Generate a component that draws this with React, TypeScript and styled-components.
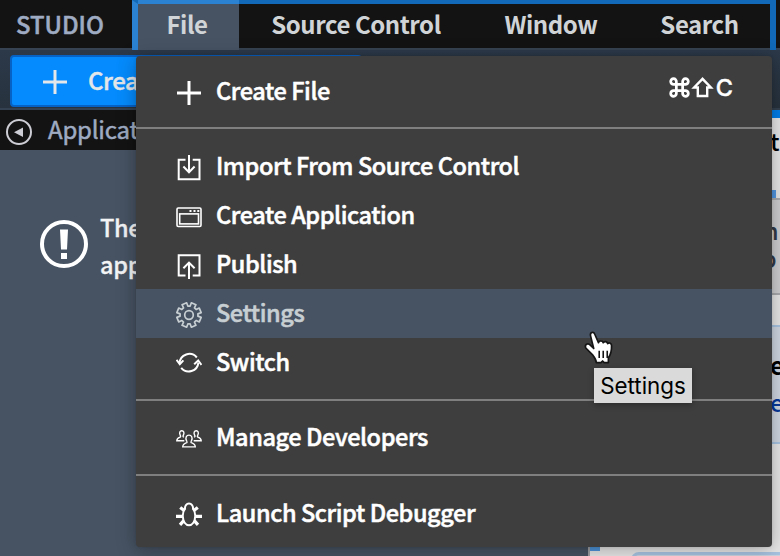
import React from "react";
import styled, { createGlobalStyle } from "styled-components";

const Global = createGlobalStyle`
  * { box-sizing: border-box; }
  body { margin: 0; overflow: hidden; background: #e8e8e8; }
`;

const sans = `"Noto Sans CJK SC", "Noto Sans", sans-serif`;

const Screen = styled.div`
  position: relative;
  width: 780px;
  height: 556px;
  overflow: hidden;
  display: flex;
  flex-direction: column;
  font-family: ${sans};
  white-space: nowrap;
`;

const MenuBar = styled.header`
  height: 50px;
  flex: none;
  display: flex;
  background: linear-gradient(#131313 48px, #374352 48px);
`;

const Brand = styled.div`
  width: 132px;
  padding-left: 16px;
  line-height: 48px;
  font-size: 23.8px;
  font-weight: 500;
  color: #9eabc2;
  -webkit-text-stroke: 0.5px #9eabc2;
`;

const MenuGroup = styled.nav`
  width: 644px;
  height: 50px;
  display: flex;
  border: solid #1169b7;
  border-width: 4px 6px 0;
  border-left-color: #2b82d3;
`;

const MenuTitle = styled.div<{ $width: number; $active?: boolean }>`
  width: ${(p) => p.$width}px;
  height: 46px;
  line-height: 40px;
  padding-right: ${(p) => (p.$active ? 3 : 0)}px;
  text-align: center;
  font-size: 24px;
  font-weight: 700;
  letter-spacing: -0.45px;
  color: #d0d4d7;
  background: ${(p) => (p.$active ? "#475363" : "transparent")};
  box-shadow: ${(p) => (p.$active ? "0 -4px #2b82d3" : "none")};
`;

const Toolbar = styled.div`
  height: 60px;
  flex: none;
  padding: 5px 10px 0;
  background: linear-gradient(#2c3949, #27323e);
  border-bottom: 2px solid #344150;
`;

const CreateButton = styled.button`
  width: 352px;
  height: 52px;
  display: flex;
  align-items: center;
  padding: 0 0 0 30px;
  gap: 20px;
  border: 2px solid #0762c6;
  border-radius: 4px;
  background: #058bfd;
  color: #e4e7ea;
  font: 500 24px/46px ${sans};
  letter-spacing: -0.4px;
  -webkit-text-stroke: 0.4px #e4e7ea;
  svg { margin-top: 2px; }
  span { margin-top: -2px; }
`;

const Body = styled.main`
  flex: 1;
  display: flex;
  min-height: 0;
`;

const Sidebar = styled.aside`
  width: 588px;
  flex: none;
  background: #475363;
`;

const SidebarHeader = styled.div`
  height: 40px;
  display: flex;
  align-items: center;
  gap: 15px;
  padding-left: 6px;
  background: #131313;
  color: #9eabc2;
  font-size: 24px;
  line-height: 38px;
  letter-spacing: -0.2px;
  -webkit-text-stroke: 0.5px #9eabc2;
  svg { margin-top: 4px; }
  span { margin-top: -3px; }
`;

const Notice = styled.div`
  display: flex;
  padding: 59px 0 0 40px;
  gap: 12px;
  color: #f3f4f5;
  font-size: 23.5px;
  line-height: 37px;
  font-weight: 500;
  letter-spacing: -0.3px;
  -webkit-text-stroke: 0.3px #f3f4f5;
  svg { margin-top: 11px; flex: none; }
`;

const Splitter = styled.div`
  width: 2px;
  flex: none;
  background: #9d9fa2;
`;

const Content = styled.section`
  flex: 1;
  display: flex;
  flex-direction: column;
  background: #e8e8e8;
  border-top: 8px solid #007eea;
  > * { flex: none; }
`;

const ContentLine = styled.div`
  height: 72px;
  padding-left: 180px;
  font-size: 24px;
  line-height: 46px;
  font-weight: 500;
  color: #000;
`;

const TabMarker = styled.div`
  height: 8px;
  width: 186px;
  background: #5298e3;
`;

const GreyPanel = styled.div`
  height: 97px;
  border: solid #a9abae;
  border-width: 2px 0;
  background: #cfcfd1;
  color: #333b48;
  font-size: 24px;
  font-weight: 500;
  line-height: 28px;
  padding: 16px 0 0 166px;
`;

const BluePanel = styled.div`
  margin: 30px 0 110px 40px;
  height: 119px;
  border: solid #a9c5e3;
  border-width: 2px 0 2px 2px;
  background: #d0d8e2;
  font-size: 24px;
  line-height: 37px;
  padding: 19px 0 0 138px;
  color: #05379b;
  font-weight: 500;
  b { display: block; color: #000; }
`;

const LowerPanel = styled.div`
  margin: -2px 0 0 41px;
  height: 30px;
  border: 3px solid #a9c5e3;
  border-radius: 8px 0 0 0;
  background: #ccd6e1;
`;

const SplitHandle = styled.div`
  position: absolute;
  left: 590px;
  top: 540px;
  width: 10px;
  height: 11px;
  background: #4e96dc;
`;

const Menu = styled.div`
  position: absolute;
  left: 136px;
  top: 56px;
  width: 636px;
  height: 491px;
  border-radius: 4px;
  background: #3e3e3e;
  box-shadow: 0 3px 20px rgba(0, 0, 0, 0.3), 0 0 3px rgba(0, 0, 0, 0.12);
`;

const MenuSection = styled.div<{ $top: number; $bottom: number; $last?: boolean }>`
  padding: ${(p) => p.$top}px 0 ${(p) => p.$bottom}px;
  border-bottom: ${(p) => (p.$last ? "none" : "2px solid #807f7f")};
`;

const MenuItem = styled.div<{ $hovered?: boolean }>`
  height: 49px;
  display: flex;
  align-items: center;
  padding: 0 39px 0 40px;
  color: ${(p) => (p.$hovered ? "#c8cfd3" : "#fff")};
  background: ${(p) => (p.$hovered ? "#475363" : "transparent")};
  svg { flex: none; margin-top: 3px; }
`;

const ItemLabel = styled.span`
  flex: 1;
  margin: -2px 0 0 14px;
  font-size: 23.5px;
  line-height: 45px;
  font-weight: 500;
  letter-spacing: -0.42px;
  -webkit-text-stroke: 0.5px currentColor;
`;

const Shortcut = styled.span`
  display: flex;
  align-items: center;
  gap: 2px;
  margin-top: -9px;
  font: 500 23.5px Inter, sans-serif;
  -webkit-text-stroke: 0.4px #fff;
  svg { margin: 0 0 0 -1px; }
`;

const Tooltip = styled.div`
  position: absolute;
  left: 594px;
  top: 368px;
  width: 98px;
  height: 35px;
  line-height: 36px;
  text-align: center;
  font-family: Inter, sans-serif;
  font-size: 22.4px;
  color: #000;
  background: #dadada;
  box-shadow: 0 2px 6px rgba(0, 0, 0, 0.3);
`;

const Pointer = styled.svg`
  position: absolute;
  left: 582px;
  top: 329px;
`;

const Icon = ({ children, w = 1.8 }: { children: React.ReactNode; w?: number }) => (
  <svg width="26" height="26" viewBox="0 0 26 26" fill="none" stroke="currentColor" strokeWidth={w}>
    {children}
  </svg>
);

const PlusIcon = () => (
  <Icon w={3}><path d="M13 1v24M1 13h24" /></Icon>
);
const ImportIcon = () => (
  <Icon w={2}><path d="M9.5 4.8H2.7v19.5h20.8V4.8h-6.8M13 0v17.2M7.4 11.5 13 17.2l5.6-5.7" /></Icon>
);
const WindowIcon = () => (
  <Icon w={1.6}>
    <rect x="1" y="4" width="24" height="18.5" rx="1.2" />
    <rect x="3.7" y="9.9" width="18.8" height="10" />
    <path d="M13.5 7h2M17.5 7h2M21.3 7h2" strokeWidth="2" />
  </Icon>
);
const PublishIcon = () => (
  <Icon w={2}><path d="M9.5 22.4H2.7V2.3h20.8v20.1h-6.8M13 26V9.6M7.4 15.3 13 9.6l5.6 5.7" /></Icon>
);
const GearIcon = () => {
  const teeth: string[] = [];
  for (let i = 0; i < 8; i++) {
    [[-15, 9], [-11.5, 12.4], [11.5, 12.4], [15, 9]].forEach(([deg, r]) => {
      const a = ((i * 45 + 22.5 + deg) * Math.PI) / 180;
      teeth.push(`${(13 + r * Math.cos(a)).toFixed(2)},${(13 + r * Math.sin(a)).toFixed(2)}`);
    });
  }
  return (
    <Icon w={1.7}>
      <polygon points={teeth.join(" ")} strokeLinejoin="round" />
      <circle cx="13" cy="13" r="4.3" />
    </Icon>
  );
};
const SwitchIcon = () => (
  <Icon w={2}>
    <path d="M20.8 6.5A9.7 9.7 0 0 0 3.6 12.3M5.2 16.8a9.7 9.7 0 0 0 17.2-5.2" />
    <path d="M.5 8.8 3.8 13.2 7.4 9.4M18.2 13.3l4-3.8 3.3 4.4" />
  </Icon>
);
const PeopleIcon = () => (
  <Icon w={1.4}>
    <path d="M8.3 14.8H.8c0-2.5 1.7-3 3.6-3.8.6-.5.3-1-.2-1.8C3 6.5 3.9 4.7 5.8 4.7s2.8 1.8 1.6 4.5c-.5.8-.7 1.4.6 2M17.7 14.8h7.5c0-2.5-1.7-3-3.6-3.8-.6-.5-.3-1 .2-1.8 1.2-2.7.3-4.5-1.6-4.5s-2.8 1.8-1.6 4.5c.5.8.7 1.4-.6 2" />
    <path d="M6.7 20.9c0-2.8 2-3.5 4.1-4.3.6-.5.2-1-.3-1.9-1.4-3-.1-5.6 2.5-5.6s3.9 2.6 2.5 5.6c-.5.9-.9 1.4-.3 1.9 2.1.8 4.1 1.5 4.1 4.3z" />
  </Icon>
);
const BugIcon = () => (
  <Icon w={2}>
    <path d="M9 6.8C8.7 3.800 10.500 1.600 13 1.600s4.300 2.200 4 5.200C19 9 19.400 11.600 19.200 14.600c-.4 5.200-3 8.600-6.200 8.600S7.200 19.800 6.800 14.600c-.2-3 .2-5.600 2.200-7.800z" />
    <path d="M8.5 8.800 4.200 5.400M17.500 8.800 21.800 5.400M7 14.400H0M19 14.400h7M8 18.400l-4 4.500M18 18.400l4 4.500" strokeWidth="3.2" />
  </Icon>
);

export default function App() {
  return (
    <Screen>
      <Global />
      <MenuBar>
        <Brand>STUDIO</Brand>
        <MenuGroup>
          <MenuTitle $width={101} $active>File</MenuTitle>
          <MenuTitle $width={234}>Source Control</MenuTitle>
          <MenuTitle $width={156}>Window</MenuTitle>
          <MenuTitle $width={141}>Search</MenuTitle>
        </MenuGroup>
      </MenuBar>
      <Toolbar>
        <CreateButton><PlusIcon /><span>Create</span></CreateButton>
      </Toolbar>
      <Body>
        <Sidebar>
          <SidebarHeader>
            <svg width="27" height="27" viewBox="0 0 27 27">
              <circle cx="13" cy="13" r="12" fill="none" stroke="#cdcdd5" strokeWidth="2" />
              <path d="M17 8.5v9.5L8 13.3z" fill="#cdcdd5" />
            </svg>
            <span>Applications</span>
          </SidebarHeader>
          <Notice>
            <svg width="48" height="48" viewBox="0 0 48 48" fill="#fff">
              <circle cx="24" cy="24" r="22" fill="none" stroke="#fff" strokeWidth="4" />
              <path d="M20 9.5h8l-1 20h-6zM21 33h6v6h-6z" />
            </svg>
            <div>There are<br />apps</div>
          </Notice>
        </Sidebar>
        <Splitter />
        <Content>
          <ContentLine>t</ContentLine>
          <TabMarker />
          <GreyPanel>m<br />&nbsp;p</GreyPanel>
          <BluePanel><b>e</b>e</BluePanel>
          <LowerPanel />
        </Content>
      </Body>
      <SplitHandle />
      <Menu>
        <MenuSection $top={11} $bottom={11}>
          <MenuItem>
            <PlusIcon /><ItemLabel>Create File</ItemLabel>
            <Shortcut>
              <svg width="21" height="21" viewBox="0 0 20 20" fill="none" stroke="currentColor" strokeWidth="2.6">
                <path d="M7 7h6v6H7zM7 7H4.500A2.700 2.700 0 1 1 7 4.500zM13 7V4.500A2.700 2.700 0 1 1 15.500 7zM13 13h2.500A2.700 2.700 0 1 1 13 15.500zM7 13v2.500A2.700 2.700 0 1 1 4.500 13z" />
              </svg>
              <svg width="23" height="21" viewBox="0 0 22 21" fill="none" stroke="currentColor" strokeWidth="2.4">
                <path d="M11 1.8 2.6 10.5h3.7V19h9.4v-8.5h3.7z" />
              </svg>
              C
            </Shortcut>
          </MenuItem>
        </MenuSection>
        <MenuSection $top={13} $bottom={12}>
          <MenuItem><ImportIcon /><ItemLabel>Import From Source Control</ItemLabel></MenuItem>
          <MenuItem><WindowIcon /><ItemLabel>Create Application</ItemLabel></MenuItem>
          <MenuItem><PublishIcon /><ItemLabel>Publish</ItemLabel></MenuItem>
          <MenuItem $hovered><GearIcon /><ItemLabel>Settings</ItemLabel></MenuItem>
          <MenuItem><SwitchIcon /><ItemLabel>Switch</ItemLabel></MenuItem>
        </MenuSection>
        <MenuSection $top={12} $bottom={12}>
          <MenuItem><PeopleIcon /><ItemLabel>Manage Developers</ItemLabel></MenuItem>
        </MenuSection>
        <MenuSection $top={13} $bottom={9} $last>
          <MenuItem><BugIcon /><ItemLabel>Launch Script Debugger</ItemLabel></MenuItem>
        </MenuSection>
      </Menu>
      <Tooltip>Settings</Tooltip>
      <Pointer width="34" height="38" viewBox="0 0 32 36">
        <path d="M11 18.5 8 6.500C7.200 3.200 10.800 2 12 5l3.500 8c.5-2.500 4-2.300 4.500 0 1-1.800 3.800-1.300 4.200.8 1.500-1.300 3.800-.3 3.700 2 .2 5-1 8.500-3 11.500v4.500h-4l-1.500-1.500-1.500 1.500h-4.500c0-3-1.200-4.500-3.200-7L3.500 18c-1.500-3 1.800-5.500 4.500-2.500z" fill="#fff" stroke="#151515" strokeWidth="1.6" strokeLinejoin="round" />
        <path d="M16.2 20.500v7M20 20.500v7M23.800 20.500v7" stroke="#151515" strokeWidth="1.5" />
      </Pointer>
    </Screen>
  );
}
